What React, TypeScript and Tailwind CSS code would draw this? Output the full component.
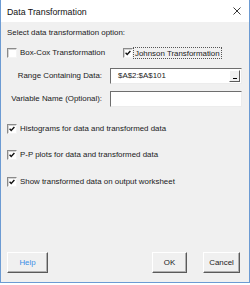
import type { ReactNode } from 'react';

function CheckBox({ checked }: { checked?: boolean }) {
  return (
    <span className="relative block w-[10px] h-[10px] shrink-0 bg-white border-t border-l border-t-[#8a8a8a] border-l-[#8a8a8a] border-b border-r border-b-[#f4f4f4] border-r-[#f4f4f4] shadow-[inset_1px_1px_0_#d4d4d4]">
      {checked && (
        <svg viewBox="0 0 8 8" className="absolute left-[0px] top-[0px] w-[8px] h-[8px]">
          <path d="M1.6 3.8 L3.2 5.4 L6.4 2" fill="none" stroke="#111" strokeWidth="1.4" />
        </svg>
      )}
    </span>
  );
}

function Check({ label, checked, focus }: { label: string; checked?: boolean; focus?: boolean }) {
  return (
    <div className="flex items-center h-[12px]">
      <CheckBox checked={checked} />
      <span className={focus ? 'ml-[0px] px-[1px] h-[12px] leading-[11px] border border-dotted border-[#555]' : 'ml-[3px] leading-[12px]'}>
        {label}
      </span>
    </div>
  );
}

function Field({ label, children }: { label: string; children?: ReactNode }) {
  return (
    <div className="flex items-center">
      <span className="w-[95px] text-right leading-[12px]">{label}</span>
      <div className="ml-[8px] w-[132px] h-[16px] flex items-center bg-white border-t border-l border-t-[#6e6e6e] border-l-[#6e6e6e] border-b border-r border-b-[#ececec] border-r-[#ececec]">
        {children}
      </div>
    </div>
  );
}

function Btn({ label, w, blue }: { label: string; w: string; blue?: boolean }) {
  return (
    <button className={`${w} h-[21px] bg-[#f0f0f0] border-t border-l border-t-white border-l-white border-b border-r border-b-[#5a5a5a] border-r-[#5a5a5a] shadow-[inset_-1px_-1px_0_#b0b0b0] leading-[12px] ${blue ? 'text-[#3d8fe6]' : 'text-[#1a1a1a]'}`}>
      {label}
    </button>
  );
}

export default function App() {
  return (
    <div className="w-[250px] h-[285px] bg-white" style={{ fontFamily: '"Liberation Sans", Arial, sans-serif' }}>
      <div className="w-[250px] h-[283px] flex flex-col bg-[#f0f0f0] border-x border-b border-[#6c9bd3] text-[7.9px] text-[#1a1a1a]">
        <div className="h-[22px] shrink-0 bg-white flex items-center justify-between pl-[6px] pr-[6px]">
          <span className="text-[8.8px] leading-[12px] pt-[1px] text-[#111]">Data Transformation</span>
          <svg viewBox="0 0 8 8" className="w-[8px] h-[8px] mr-[2px]">
            <path d="M0.5 0.5 L7.5 7.5 M7.5 0.5 L0.5 7.5" stroke="#222" strokeWidth="0.9" />
          </svg>
        </div>

        <div className="flex flex-col flex-1 pl-[6px] pr-[6px]">
          <p className="mt-[5px] leading-[12px]">Select data transformation option:</p>

          <div className="mt-[8px] flex items-center">
            <div className="w-[116px]">
              <Check label="Box-Cox Transformation" />
            </div>
            <Check label="Johnson Transformation" checked focus />
          </div>

          <div className="mt-[9px]">
            <Field label="Range Containing Data:">
              <span className="ml-[7px] flex-1 leading-[12px]">$A$2:$A$101</span>
              <span className="w-[11px] h-[12px] mr-[1px] flex items-end justify-center pb-[2px] bg-[#f0f0f0] border-t border-l border-t-white border-l-white border-b border-r border-b-[#5a5a5a] border-r-[#5a5a5a]">
                <span className="block w-[4px] h-[1px] bg-black" />
              </span>
            </Field>
          </div>

          <div className="mt-[7px]">
            <Field label="Variable Name (Optional):" />
          </div>

          <div className="mt-[16px]">
            <Check label="Histograms for data and transformed data" checked />
          </div>
          <div className="mt-[14px]">
            <Check label="P-P plots for data and transformed data" checked />
          </div>
          <div className="mt-[15px]">
            <Check label="Show transformed data on output worksheet" checked />
          </div>

          <div className="mt-auto mb-[9px] flex items-center">
            <Btn label="Help" w="w-[41px]" blue />
            <div className="ml-auto flex gap-[16px] mr-[3px]">
              <Btn label="OK" w="w-[35px]" />
              <Btn label="Cancel" w="w-[37px]" />
            </div>
          </div>
        </div>
      </div>
    </div>
  );
}
